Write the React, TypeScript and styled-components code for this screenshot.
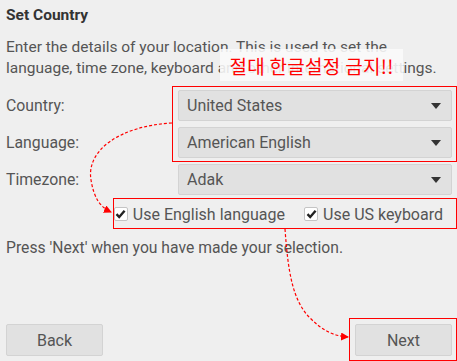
import { FC, Fragment } from 'react'
import styled, { createGlobalStyle } from 'styled-components'

const GlobalStyle = createGlobalStyle`
  html, body {
    margin: 0;
    padding: 0;
    background: #efefef;
  }
`

const Page = styled.div`
  position: relative;
  display: flex;
  flex-direction: column;
  width: 457px;
  height: 361px;
  box-sizing: border-box;
  padding: 5px 5px 5px 6px;
  background: #efefef;
  font-family: Roboto, "Liberation Sans", sans-serif;
  color: #555;
  overflow: hidden;
`

const Title = styled.h1`
  margin: 0;
  font-size: 15.5px;
  font-weight: 700;
  line-height: 20px;
  color: #333;
`

const Intro = styled.p`
  margin: 12px 0 0;
  font-size: 15.5px;
  line-height: 21px;
`

const Form = styled.div`
  display: grid;
  grid-template-columns: 172px 1fr;
  row-gap: 6px;
  margin-top: 11px;
`

const Label = styled.label`
  display: flex;
  align-items: center;
  font-size: 15.8px;
`

const Select = styled.div`
  display: flex;
  align-items: center;
  justify-content: space-between;
  height: 31px;
  box-sizing: border-box;
  padding: 0 10px 0 8px;
  background: #e1e1e1;
  border: 1px solid #d3d3d3;
  border-radius: 2px;
  font-size: 16px;
  color: #555;
`

const Caret = styled.span`
  width: 0;
  height: 0;
  border-left: 5.5px solid transparent;
  border-right: 5.5px solid transparent;
  border-top: 6px solid #333;
`

const Options = styled.div`
  display: flex;
  justify-content: flex-end;
  align-items: center;
  gap: 19px;
  height: 30px;
  margin-top: 4px;
  padding-right: 9px;
`

const Check = styled.label`
  display: flex;
  align-items: center;
  gap: 5px;
  font-size: 16px;
`

const Box = styled.span`
  display: flex;
  align-items: center;
  justify-content: center;
  width: 14px;
  height: 14px;
  box-sizing: border-box;
  background: #fff;
  border: 1px solid #c4c4c4;
  border-radius: 2px;
`

const Footer = styled.p`
  margin: 9px 0 0;
  font-size: 15.7px;
  line-height: 20px;
`

const Buttons = styled.div`
  display: flex;
  justify-content: space-between;
  margin-top: auto;
`

const Button = styled.button`
  width: 97px;
  height: 32px;
  background: #e1e1e1;
  border: 1px solid #d3d3d3;
  border-radius: 2px;
  font-family: inherit;
  font-size: 16px;
  color: #555;
`

// annotations drawn on top of the screenshot
const Frame = styled.div<{ $x: number; $y: number; $w: number; $h: number }>`
  position: absolute;
  left: ${p => p.$x}px;
  top: ${p => p.$y}px;
  width: ${p => p.$w}px;
  height: ${p => p.$h}px;
  box-sizing: border-box;
  border: 1px solid #f00;
`

const Warning = styled.div`
  position: absolute;
  left: 220px;
  top: 49px;
  width: 183px;
  height: 32px;
  display: flex;
  align-items: center;
  justify-content: center;
  background: rgba(250, 250, 250, 0.88);
  color: #f00;
  font-family: "Noto Sans CJK KR", sans-serif;
  font-size: 19px;
  letter-spacing: 0.3px;
`

const Arrows = styled.svg`
  position: absolute;
  left: 0;
  top: 0;
  pointer-events: none;
`

const Tick: FC = () => (
  <svg width="11" height="10" viewBox="0 0 11 10">
    <path d="M1.5 5.2 L4.2 8 L9.6 1.8" fill="none" stroke="#222" strokeWidth="2.4" />
  </svg>
)

const fields = [
  { label: 'Country:', value: 'United States' },
  { label: 'Language:', value: 'American English' },
  { label: 'Timezone:', value: 'Adak' },
]

const App: FC = () => (
  <Page>
    <GlobalStyle />
    <Title>Set Country</Title>
    <Intro>
      Enter the details of your location. This is used to set the language, time zone, keyboard and other international settings.
    </Intro>
    <Form>
      {fields.map(f => (
        <Fragment key={f.label}>
          <Label>{f.label}</Label>
          <Select>
            {f.value}
            <Caret />
          </Select>
        </Fragment>
      ))}
    </Form>
    <Options>
      <Check><Box><Tick /></Box>Use English language</Check>
      <Check><Box><Tick /></Box>Use US keyboard</Check>
    </Options>
    <Footer>Press 'Next' when you have made your selection.</Footer>
    <Buttons>
      <Button>Back</Button>
      <Button>Next</Button>
    </Buttons>

    <Warning>절대 한글설정 금지!!</Warning>
    <Frame $x={172} $y={86} $w={285} $h={76} />
    <Frame $x={113} $y={198} $w={344} $h={31} />
    <Frame $x={349} $y={318} $w={108} $h={43} />
    <Arrows width="457" height="361">
      <defs>
        <marker id="head" markerWidth="8" markerHeight="8" refX="7" refY="4" orient="auto" markerUnits="userSpaceOnUse">
          <path d="M0 0 L8 4 L0 8 Z" fill="#f00" />
        </marker>
      </defs>
      <path d="M172 123 C120 126 86 150 91 180 C94 198 100 207 111 212" fill="none" stroke="#f00" strokeWidth="1.2" strokeDasharray="3 2" markerEnd="url(#head)" />
      <path d="M285 229 C288 270 292 300 310 318 C322 330 333 336 348 337" fill="none" stroke="#f00" strokeWidth="1.2" strokeDasharray="3 2" markerEnd="url(#head)" />
    </Arrows>
  </Page>
)

export default App
